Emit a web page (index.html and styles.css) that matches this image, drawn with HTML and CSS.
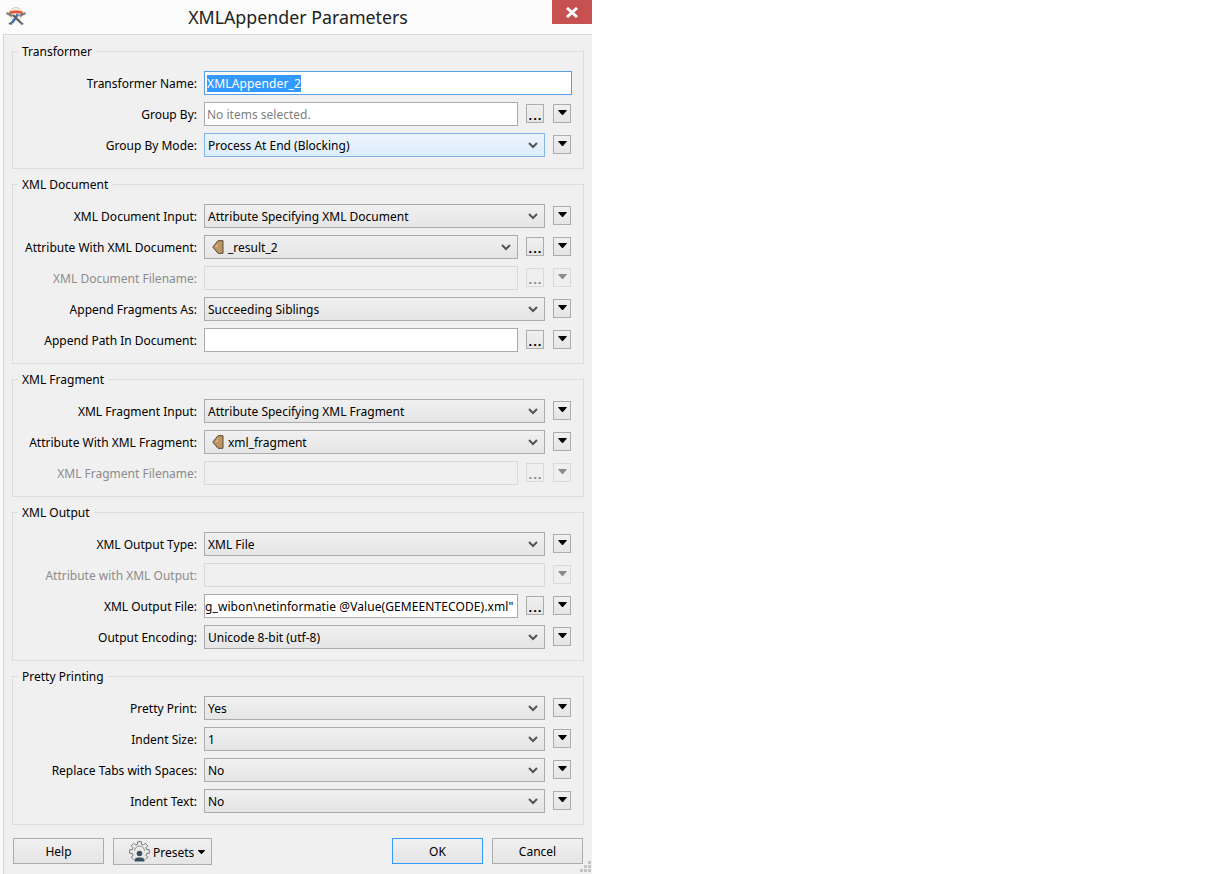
FILE: index.html
```html
<!DOCTYPE html>
<html lang="en">
<head>
<meta charset="utf-8">
<title>XMLAppender Parameters</title>
<link rel="stylesheet" href="styles.css">
</head>
<body>
<svg width="0" height="0" class="defs">
  <symbol id="chev" viewBox="0 0 10 7"><path d="M1 1l4 4 4-4" fill="none" stroke="#555" stroke-width="2"/></symbol>
  <symbol id="attr" viewBox="0 0 12 14"><path d="M6 .7L.8 7l5.200 6.300h5V.7z" fill="#bb9663" stroke="#5a4a33"/><path d="M3 7l3-3.500V7z" fill="#d3b488"/></symbol>
  <symbol id="tri" viewBox="0 0 10 6"><path d="M0 0h10v1L5.500 6h-1L0 1z"/></symbol>
</svg>
<main class="window">
  <header class="titlebar">
    <svg class="appicon" width="20" height="18" viewBox="0 0 20 18">
      <circle cx="10" cy="7" r="6.500" fill="#f6efdc" stroke="#d8cba6"/>
      <path d="M3 5c3-2 11-2 14 0l-1 2c-3-1-9-1-12 0z" fill="#e0533f"/>
      <path d="M1 5L7 8l-1 2L0 7z" fill="#7a7a7a"/>
      <path d="M19 5L13 8l1 2 6-3z" fill="#7a7a7a"/>
      <path d="M12 7L6 16" stroke="#3f74b8" stroke-width="2.500"/>
      <path d="M7 8L15 16" stroke="#5b5b5b" stroke-width="2"/>
      <path d="M2 17l4-3 0 4zM14 14l4 3-3 1z" fill="#666"/>
    </svg>
    <h1 class="title">XMLAppender Parameters</h1>
    <button class="close" aria-label="Close"><svg width="14" height="11" viewBox="0 0 14 11"><path d="M2 1l10 9M12 1L2 10" stroke="#fff" stroke-width="3"/></svg></button>
  </header>
  <div class="client">
    <fieldset class="group">
      <legend>Transformer</legend>
      <div class="row"><label>Transformer Name:</label><div class="ctrl"><div class="input focus"><span class="sel">XMLAppender_2</span></div></div></div>
      <div class="row"><label>Group By:</label><div class="ctrl"><div class="input hint">No items selected.</div><button class="dots">...</button><button class="tool"><svg width="9" height="5"><use href="#tri"/></svg></button></div></div>
      <div class="row"><label>Group By Mode:</label><div class="ctrl"><div class="combo active"><span>Process At End (Blocking)</span><svg class="chev" width="10" height="7"><use href="#chev"/></svg></div><button class="tool"><svg width="9" height="5"><use href="#tri"/></svg></button></div></div>
    </fieldset>
    <fieldset class="group">
      <legend>XML Document</legend>
      <div class="row"><label>XML Document Input:</label><div class="ctrl"><div class="combo"><span>Attribute Specifying XML Document</span><svg class="chev" width="10" height="7"><use href="#chev"/></svg></div><button class="tool"><svg width="9" height="5"><use href="#tri"/></svg></button></div></div>
      <div class="row"><label>Attribute With XML Document:</label><div class="ctrl"><div class="combo attrcombo"><svg class="attr" width="12" height="14"><use href="#attr"/></svg><span>_result_2</span><svg class="chev" width="10" height="7"><use href="#chev"/></svg></div><button class="dots">...</button><button class="tool"><svg width="9" height="5"><use href="#tri"/></svg></button></div></div>
      <div class="row off"><label>XML Document Filename:</label><div class="ctrl"><div class="input"></div><button class="dots">...</button><button class="tool"><svg width="9" height="5"><use href="#tri"/></svg></button></div></div>
      <div class="row"><label>Append Fragments As:</label><div class="ctrl"><div class="combo"><span>Succeeding Siblings</span><svg class="chev" width="10" height="7"><use href="#chev"/></svg></div><button class="tool"><svg width="9" height="5"><use href="#tri"/></svg></button></div></div>
      <div class="row"><label>Append Path In Document:</label><div class="ctrl"><div class="input"></div><button class="dots">...</button><button class="tool"><svg width="9" height="5"><use href="#tri"/></svg></button></div></div>
    </fieldset>
    <fieldset class="group">
      <legend>XML Fragment</legend>
      <div class="row"><label>XML Fragment Input:</label><div class="ctrl"><div class="combo"><span>Attribute Specifying XML Fragment</span><svg class="chev" width="10" height="7"><use href="#chev"/></svg></div><button class="tool"><svg width="9" height="5"><use href="#tri"/></svg></button></div></div>
      <div class="row"><label>Attribute With XML Fragment:</label><div class="ctrl"><div class="combo attrcombo"><svg class="attr" width="12" height="14"><use href="#attr"/></svg><span>xml_fragment</span><svg class="chev" width="10" height="7"><use href="#chev"/></svg></div><button class="tool"><svg width="9" height="5"><use href="#tri"/></svg></button></div></div>
      <div class="row off"><label>XML Fragment Filename:</label><div class="ctrl"><div class="input"></div><button class="dots">...</button><button class="tool"><svg width="9" height="5"><use href="#tri"/></svg></button></div></div>
    </fieldset>
    <fieldset class="group">
      <legend>XML Output</legend>
      <div class="row"><label>XML Output Type:</label><div class="ctrl"><div class="combo"><span>XML File</span><svg class="chev" width="10" height="7"><use href="#chev"/></svg></div><button class="tool"><svg width="9" height="5"><use href="#tri"/></svg></button></div></div>
      <div class="row off"><label>Attribute with XML Output:</label><div class="ctrl"><div class="input"></div><button class="tool"><svg width="9" height="5"><use href="#tri"/></svg></button></div></div>
      <div class="row"><label>XML Output File:</label><div class="ctrl"><div class="input tight">g_wibon\netinformatie @Value(GEMEENTECODE).xml"</div><button class="dots">...</button><button class="tool"><svg width="9" height="5"><use href="#tri"/></svg></button></div></div>
      <div class="row"><label>Output Encoding:</label><div class="ctrl"><div class="combo"><span>Unicode 8-bit (utf-8)</span><svg class="chev" width="10" height="7"><use href="#chev"/></svg></div><button class="tool"><svg width="9" height="5"><use href="#tri"/></svg></button></div></div>
    </fieldset>
    <fieldset class="group">
      <legend>Pretty Printing</legend>
      <div class="row"><label>Pretty Print:</label><div class="ctrl"><div class="combo"><span>Yes</span><svg class="chev" width="10" height="7"><use href="#chev"/></svg></div><button class="tool"><svg width="9" height="5"><use href="#tri"/></svg></button></div></div>
      <div class="row"><label>Indent Size:</label><div class="ctrl"><div class="combo"><span>1</span><svg class="chev" width="10" height="7"><use href="#chev"/></svg></div><button class="tool"><svg width="9" height="5"><use href="#tri"/></svg></button></div></div>
      <div class="row"><label>Replace Tabs with Spaces:</label><div class="ctrl"><div class="combo"><span>No</span><svg class="chev" width="10" height="7"><use href="#chev"/></svg></div><button class="tool"><svg width="9" height="5"><use href="#tri"/></svg></button></div></div>
      <div class="row"><label>Indent Text:</label><div class="ctrl"><div class="combo"><span>No</span><svg class="chev" width="10" height="7"><use href="#chev"/></svg></div><button class="tool"><svg width="9" height="5"><use href="#tri"/></svg></button></div></div>
    </fieldset>
    <footer class="footer">
      <button class="btn">Help</button>
      <button class="btn presets">
        <svg width="21" height="22" viewBox="0 0 21 22">
          <path d="M8.760.650L12.240.650 12.440 3.260 14.250 4 16.240 2.310 18.690 4.760 17 6.750 17.740 8.560 20.350 8.760 20.350 12.240 17.740 12.440 17 14.250 18.690 16.240 16.240 18.690 14.250 17 6.750 17 4.760 18.690 2.310 16.240 4 14.250 3.260 12.440.650 12.240.650 8.760 3.260 8.560 4 6.750 2.310 4.760 4.760 2.310 6.750 4 8.560 3.260Z" fill="none" stroke="#777"/>
          <path d="M5.500 10a5 5 0 0 1 10 0" fill="none" stroke="#8a8a8a"/>
          <path d="M5 21v-3l3-2h5l3 2v3z" fill="#37505f" stroke="#eee"/>
          <circle cx="10.500" cy="12.500" r="2.800" fill="#37505f"/>
        </svg>
        <span>Presets</span>
        <svg width="7" height="4"><use href="#tri"/></svg>
      </button>
      <div class="spacer"></div>
      <button class="btn default">OK</button>
      <button class="btn">Cancel</button>
      <svg class="grip" width="11" height="11" viewBox="0 0 11 11" fill="#c4c4c4"><path d="M8 0h3v3H8zM4 4h3v3H4zM8 4h3v3H8zM0 8h3v3H0zM4 8h3v3H4zM8 8h3v3H8z"/></svg>
    </footer>
  </div>
</main>
</body>
</html>
```
FILE: styles.css
```css
* { box-sizing: border-box; }
html, body { margin: 0; height: 100%; background: #fff; overflow: hidden; }
body { font: 12px/16px "Noto Sans", sans-serif; color: #000; }
.defs { position: absolute; }
.window { width: 592px; height: 874px; background: #fbfbfb; display: flex; flex-direction: column; }
.titlebar { height: 34px; flex: none; display: grid; grid-template-columns: 40px 1fr 40px; padding-left: 4px; }
.appicon { margin: 7px 0 0 2px; }
.title { margin: 0; text-align: center; font-weight: 400; font-size: 17.8px; line-height: 35px; color: #222; }
.close { width: 40px; height: 24px; padding: 0; border: 0; background: #c75050; display: flex; align-items: center; justify-content: center; }
.client { flex: 1; margin-left: 3px; border-left: 1px solid #d6d6d6; border-top: 1px solid #d6d6d6; background: #f0f0f0; padding: 7px 8px 0; display: flex; flex-direction: column; position: relative; }
.group { margin: 0 0 6px; padding: 11px 11px 11px 0; border: 1px solid #dcdcdc; min-width: 0; display: flex; flex-direction: column; gap: 7px; }
.group legend { margin-left: 5px; padding: 2px 4px 0; line-height: 16px; }
.row { display: grid; grid-template-columns: 184px 1fr; column-gap: 7px; height: 24px; }
.row label { text-align: right; line-height: 26px; white-space: nowrap; }
.ctrl { display: flex; gap: 8px; min-width: 0; }
.input, .combo { flex: 1; min-width: 0; height: 24px; border: 1px solid #ababab; white-space: nowrap; overflow: hidden; line-height: 24px; }
.input { background: #fff; padding-left: 2px; }
.input.focus { border-color: #569de5; }
.input.hint { color: #808080; }
.input.tight { padding-left: 0; letter-spacing: .085px; }
.sel { background: #3399ff; color: #fff; display: inline-block; line-height: 16px; padding-top: 1px; letter-spacing: .15px; }
.combo { background: linear-gradient(#f0f0f0, #e5e5e5); padding: 2px 6px 0 3px; display: flex; align-items: center; }
.combo span { flex: 1; }
.combo svg { margin-top: -2px; }
.combo.active { background: linear-gradient(#ecf4fc, #dcecfc); border-color: #7eb4ea; }
.attr { margin: 0 4px 0 4px; flex: none; }
.dots, .tool { width: 18px; height: 19px; margin-top: 2px; padding: 0; flex: none; border: 1px solid #acacac; background: linear-gradient(#f0f0f0, #e5e5e5); font: inherit; }
.dots { font-weight: 700; font-size: 13px; line-height: 18px; letter-spacing: 1px; margin-right: 1px; padding: 1px 0 0 1px; }
.tool { margin-right: 1px; display: flex; align-items: flex-start; justify-content: center; padding-top: 5px; }
.off { color: #8c8c8c; }
.off .input { background: #f0f0f0; border-color: #d9d9d9; }
.off .dots, .off .tool { border-color: #d9d9d9; background: #efefef; color: #888; }
.off .tool svg { fill: #8c8c8c; }
.footer { flex: 1; display: flex; align-items: flex-start; padding: 7px 1px 0 1px; gap: 9px; position: relative; }
.btn { width: 91px; height: 26px; padding: 2px 0 0; border: 1px solid #acacac; background: linear-gradient(#f0f0f0, #e5e5e5); font: inherit; color: #000; }
.btn.default { border-color: #3399ff; }
.presets { width: 99px; height: 27px; display: flex; align-items: center; padding: 0 0 0 15px; }
.presets span { margin: 2px 0 0 3px; width: 43px; overflow: hidden; text-align: left; }
.presets svg:last-child { margin-left: 2px; }
.spacer { flex: 1; }
.grip { position: absolute; right: -7px; bottom: 2px; }
```
